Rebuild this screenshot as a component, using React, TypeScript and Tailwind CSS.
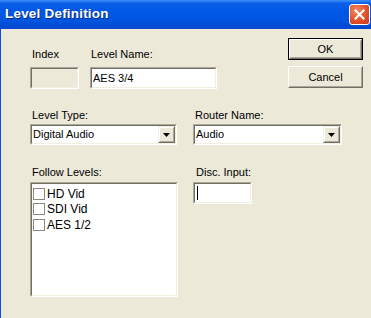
import React from "react";

const font = { fontFamily: '"Liberation Sans", Arial, sans-serif' };

function Sunken({ className = "", children }: { className?: string; children?: React.ReactNode }) {
  return (
    <div className={`border border-t-[#aca899] border-l-[#aca899] border-b-white border-r-white ${className}`}>
      <div className="h-full w-full border border-t-[#716f64] border-l-[#716f64] border-b-[#f1efe2] border-r-[#f1efe2]">
        {children}
      </div>
    </div>
  );
}

function DropArrow() {
  return (
    <div className="w-[17px] h-full border border-t-[#f1efe2] border-l-[#f1efe2] border-b-[#716f64] border-r-[#716f64] bg-[#ece9d8]">
      <div className="h-full w-full border border-t-white border-l-white border-b-[#aca899] border-r-[#aca899] flex items-center justify-center">
        <svg width="7" height="4" viewBox="0 0 7 4">
          <path d="M0 0h7L3.5 4z" fill="#000" />
        </svg>
      </div>
    </div>
  );
}

function Select({ value, className = "" }: { value: string; className?: string }) {
  return (
    <Sunken className={`h-[21px] ${className}`}>
      <div className="flex h-full bg-white">
        <span className="flex-1 pl-[1px] text-[11px] leading-[17px] text-black">{value}</span>
        <DropArrow />
      </div>
    </Sunken>
  );
}

function Check({ label }: { label: string }) {
  return (
    <div className="flex items-center h-[15.5px]">
      <div className="w-[12px] h-[12px] border border-[#8c8a80] bg-white" />
      <span className="ml-[2px] text-[12px] leading-[14px] text-black">{label}</span>
    </div>
  );
}

export default function App() {
  return (
    <div className="w-[371px] h-[318px] overflow-hidden bg-[#ece9d8]" style={font}>
      <div className="h-[29px] flex items-center justify-between pl-[5px] pr-[1px] bg-[linear-gradient(to_bottom,#3d8ff7_0%,#0a5de6_12%,#0058e6_40%,#0055e0_70%,#0046cc_100%)]">
        <span className="text-white font-bold text-[13.5px] tracking-[0.2px] [text-shadow:1px_1px_0_#0a2b80]">
          Level Definition
        </span>
        <div className="w-[21px] h-[21px] rounded-[3px] border border-white bg-[radial-gradient(circle_at_35%_30%,#f08a6a,#e2512a_55%,#c23a16)] flex items-center justify-center">
          <svg width="11" height="11" viewBox="0 0 11 11">
            <path d="M1.5 1.5l8 8M9.5 1.5l-8 8" stroke="#fff" strokeWidth="2" strokeLinecap="square" />
          </svg>
        </div>
      </div>

      <div className="h-[289px] border-l border-[#0055e5] pl-[29px] pr-[8px] pt-[9px]">
        <div className="flex justify-between">
          <div className="flex pt-[10px]">
            <div className="w-[49px] flex flex-col">
              <span className="pl-[2px] text-[11px] leading-[13px] text-black">Index</span>
              <Sunken className="mt-[6px] h-[22px]" />
            </div>
            <div className="ml-[11px] w-[127px] flex flex-col">
              <span className="pl-[1px] text-[11px] leading-[13px] text-black">Level Name:</span>
              <Sunken className="mt-[6px] h-[22px]">
                <div className="h-full bg-white pl-[1px] text-[11px] leading-[18px] text-black">AES 3/4</div>
              </Sunken>
            </div>
          </div>
          <div className="flex flex-col gap-[6px]">
            <div className="w-[75px] h-[22px] border border-black">
              <div className="h-full border border-t-white border-l-white border-b-[#716f64] border-r-[#716f64]">
                <div className="h-full border border-transparent border-b-[#aca899] border-r-[#aca899] flex items-center justify-center text-[11px] text-black">
                  OK
                </div>
              </div>
            </div>
            <div className="w-[75px] h-[22px] border border-t-white border-l-white border-b-[#716f64] border-r-[#716f64]">
              <div className="h-full border border-transparent border-b-[#aca899] border-r-[#aca899] flex items-center justify-center text-[11px] text-black">
                Cancel
              </div>
            </div>
          </div>
        </div>

        <div className="flex gap-[16px] mt-[20px]">
          <div className="w-[147px] flex flex-col">
            <span className="pl-[2px] text-[11px] leading-[13px] text-black">Level Type:</span>
            <Select value="Digital Audio" className="mt-[2px]" />
          </div>
          <div className="w-[149px] flex flex-col">
            <span className="pl-[2px] text-[11px] leading-[13px] text-black">Router Name:</span>
            <Select value="Audio" className="mt-[2px]" />
          </div>
        </div>

        <div className="flex gap-[15px] mt-[21px]">
          <div className="w-[148px] flex flex-col">
            <span className="pl-[2px] text-[11px] leading-[13px] text-black">Follow Levels:</span>
            <Sunken className="mt-[3px] h-[115px]">
              <div className="h-full bg-white pt-[2px] pl-[1px]">
                <Check label="HD Vid" />
                <Check label="SDI Vid" />
                <Check label="AES 1/2" />
              </div>
            </Sunken>
          </div>
          <div className="flex flex-col">
            <span className="pl-[3px] text-[11px] leading-[13px] text-black">Disc. Input:</span>
            <Sunken className="mt-[3px] w-[59px] h-[22px]">
              <div className="h-full bg-white pl-[2px] pt-[2px]">
                <div className="w-[1px] h-[14px] bg-black" />
              </div>
            </Sunken>
          </div>
        </div>
      </div>
    </div>
  );
}
